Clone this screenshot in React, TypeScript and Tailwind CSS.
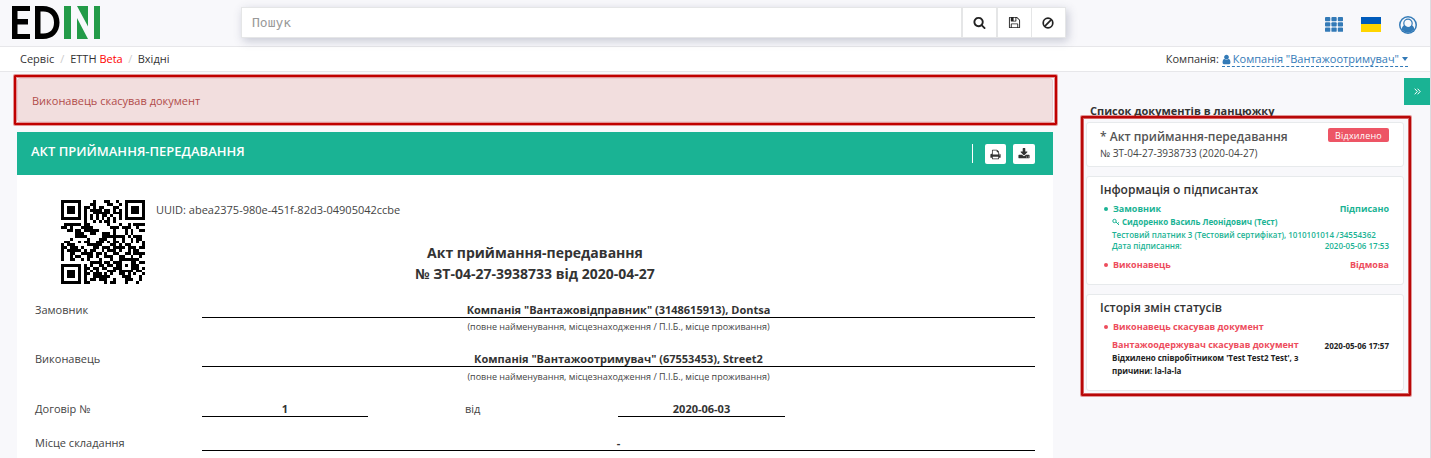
import type { ReactNode } from "react";

const QR_ROWS = [
  "11111110000100011001001111111",
  "10000010001100001100101000001",
  "10111010110101100011001011101",
  "10111010101111011010101011101",
  "10111010100111111011101011101",
  "10000010101010110100101000001",
  "11111110101010101010101111111",
  "00000000100101011010000000000",
  "01111110110000001000100101111",
  "11010001111000000111011100100",
  "00110110111110000010001010011",
  "00000111001100111010001010000",
  "00000111100000111111110101110",
  "00010000010001110010010010110",
  "01100010110011101011010010101",
  "10111000011111000110101100001",
  "11011101000110111011110111011",
  "10111110101100101110100101100",
  "10011001111011010011001101111",
  "10010110011010011100110010010",
  "10011001010001000100111111100",
  "00000000001111011011100011011",
  "11111110101001101101101011100",
  "10000010110110110011100011101",
  "10111010101010001110111110110",
  "10111010110111010100110101001",
  "10111010100111111000011100010",
  "10000010101101110010001110010",
  "11111110110000010110001000100",
];

function QrCode() {
  return (
    <svg width="84" height="84" viewBox="0 0 29 29" shapeRendering="crispEdges">
      {QR_ROWS.flatMap((row, y) =>
        row.split("").map((c, x) => (c === "1" ? <rect key={`${x}-${y}`} x={x} y={y} width="1" height="1" /> : null)),
      )}
    </svg>
  );
}

function Glyph({ d, size, className = "" }: { d: string; size: number; className?: string }) {
  return (
    <svg width={size} height={size} viewBox="0 0 1792 1792" fill="currentColor" className={`shrink-0 ${className}`}>
      <path d={d} />
    </svg>
  );
}

const SEARCH =
  "M1216 832q0-185-131.5-316.5t-316.5-131.5-316.5 131.5-131.5 316.5 131.5 316.5 316.5 131.5 316.5-131.5 131.5-316.5zm512 832q0 52-38 90t-90 38q-54 0-90-38l-343-342q-179 124-399 124-143 0-273.5-55.5t-225-150-150-225-55.5-273.5 55.5-273.5 150-225 225-150 273.5-55.5 273.5 55.5 225 150 150 225 55.5 273.5q0 220-124 399l343 343q37 37 37 90z";
const FLOPPY =
  "M512 1536h768v-384h-768v384zm896 0h128v-896q0-14-10-38.5t-20-34.5l-281-281q-10-10-34-20t-39-10v416q0 40-28 68t-68 28h-576q-40 0-68-28t-28-68v-416h-128v1280h128v-416q0-40 28-68t68-28h832q40 0 68 28t28 68v416zm-384-928v-320q0-13-9.5-22.5t-22.5-9.5h-192q-13 0-22.5 9.5t-9.5 22.5v320q0 13 9.5 22.5t22.5 9.5h192q13 0 22.5-9.5t9.5-22.5zm640 32v928q0 40-28 68t-68 28h-1344q-40 0-68-28t-28-68v-1344q0-40 28-68t68-28h928q40 0 88 20t76 48l280 280q28 28 48 76t20 88z";
const PRINT =
  "M448 1536h896v-256h-896v256zm0-640h896v-384h-160q-40 0-68-28t-28-68v-160h-640v640zm1152 64q0-26-19-45t-45-19-45 19-19 45 19 45 45 19 45-19 19-45zm128 0v416q0 13-9.5 22.5t-22.5 9.5h-224v160q0 40-28 68t-68 28h-960q-40 0-68-28t-28-68v-160h-224q-13 0-22.5-9.5t-9.5-22.5v-416q0-79 56.5-135.5t135.5-56.5h64v-544q0-40 28-68t68-28h672q40 0 88 20t76 48l152 152q28 28 48 76t20 88v256h64q79 0 135.5 56.5t56.5 135.5z";
const DOWNLOAD =
  "M1344 1344q0-26-19-45t-45-19-45 19-19 45 19 45 45 19 45-19 19-45zm256 0q0-26-19-45t-45-19-45 19-19 45 19 45 45 19 45-19 19-45zm128-224v320q0 40-28 68t-68 28h-1472q-40 0-68-28t-28-68v-320q0-40 28-68t68-28h465l135 136q58 56 136 56t136-56l136-136h464q40 0 68 28t28 68zm-325-569q17 41-14 70l-448 448q-18 19-45 19t-45-19l-448-448q-31-29-14-70 17-39 59-39h256v-448q0-26 19-45t45-19h256q26 0 45 19t19 45v448h256q42 0 59 39z";
const USER =
  "M1536 1399q0 109-62.5 187t-150.5 78h-854q-88 0-150.5-78t-62.5-187q0-85 8.5-160.5t31.5-152 58.5-131 94-89 134.5-34.5q131 128 313 128t313-128q76 0 134.5 34.5t94 89 58.5 131 31.5 152 8.5 160.5zm-256-887q0 159-112.5 271.5t-271.5 112.5-271.5-112.5-112.5-271.5 112.5-271.5 271.5-112.5 271.5 112.5 112.5 271.5z";

function Logo() {
  return (
    <svg width="88" height="33" viewBox="0 0 88 33">
      <path d="M0 0H18V5H5.5V13H16V18.500H5.500V28H18V33H0Z" fill="#000" />
      <path
        fillRule="evenodd"
        d="M23 0H31C41 0 47.500 6.500 47.500 16.500S41 33 31 33H23ZM28.500 5.500V27.500H31.500C38 27.500 42 23.500 42 16.500S38 5.500 31.500 5.500Z"
        fill="#000"
      />
      <path d="M52 0H59V33H52ZM82 0H88V33H82ZM65 0H76V20.500ZM65 12L76 33H65Z" fill="#239b48" />
    </svg>
  );
}

function Header() {
  return (
    <header className="flex h-[47px] items-start border-b border-[#e7e7ea] bg-[#f8f8fb]">
      <div className="ml-3 mt-1.5 w-[229px]">
        <Logo />
      </div>
      <div className="mt-[7px] flex h-[31px] w-[825px] border border-[#e5e6e7] bg-white text-[#222] shadow-[2px_3px_9px_rgba(70,75,110,0.28)]">
        <div className="flex flex-1 items-center pl-[10px] pt-px font-['DejaVu_Sans_Mono',monospace] text-[13px] text-[#999]">
          Пошук
        </div>
        <div className="flex w-[35px] items-center justify-center border-l-2 border-[#e5e6e7]">
          <Glyph d={SEARCH} size={13} />
        </div>
        <div className="flex w-[35px] items-center justify-center border-l-2 border-[#e5e6e7]">
          <Glyph d={FLOPPY} size={13} />
        </div>
        <div className="flex w-[34px] items-center justify-center border-l border-[#e5e6e7] pr-px">
          <svg width="12" height="12" viewBox="0 0 12 12" fill="none" stroke="currentColor" strokeWidth="1.700">
            <circle cx="6" cy="6" r="4.800" />
            <path d="M9.300 2.700L2.700 9.300" />
          </svg>
        </div>
      </div>
      <div className="ml-auto mr-[13px] mt-[15px] flex h-[19px] items-center text-[#337ab7]">
        <svg width="18" height="15" viewBox="0 0 18 15" fill="currentColor" className="mr-[18px]">
          {[0, 5.3, 10.6].flatMap((y) =>
            [0, 6.4, 12.8].map((x) => <rect key={`${x}-${y}`} x={x} y={y} width="5.300" height="4.200" rx="0.900" />),
          )}
        </svg>
        <div className="mr-[18px] flex h-[15px] w-5 flex-col">
          <div className="h-[7px] bg-[#005bbb]" />
          <div className="h-2 bg-[#ffd500]" />
        </div>
        <svg width="18" height="18" viewBox="0 0 18 18">
          <circle cx="9" cy="9" r="9" fill="currentColor" />
          <circle cx="9" cy="9" r="7.500" fill="#f8f8fb" />
          <path d="M2.600 13.400C3 10.800 4 9.500 5.800 9.300Q9 12.400 12.200 9.300C14 9.500 15 10.800 15.400 13.400Q9 20 2.600 13.400Z" fill="currentColor" />
          <circle cx="9" cy="7.300" r="3.900" fill="#f8f8fb" />
          <circle cx="9" cy="7.300" r="4.200" fill="none" stroke="currentColor" strokeWidth="1.200" />
        </svg>
      </div>
    </header>
  );
}

function Breadcrumbs() {
  return (
    <nav className="flex h-[25px] items-center border-b border-[#e7e7ea] bg-white pl-5 pr-[22px] text-[11px] text-[#333]">
      <span>Сервіс</span>
      <span className="w-4 text-center text-[#ccc]">/</span>
      <span>
        ЕТТН <span className="text-[#f00]">Beta</span>
      </span>
      <span className="w-[15px] text-center text-[#ccc]">/</span>
      <span>Вхідні</span>
      <span className="ml-auto mr-[3px]">Компанія:</span>
      <span className="flex h-[15px] items-center border-b border-dashed border-[#337ab7] pt-px text-[#337ab7]">
        <Glyph d={USER} size={11} className="-ml-px mr-px" />
        Компанія "Вантажоотримувач"
        <span className="ml-[3px] border-x-[3.5px] border-t-[4px] border-x-transparent border-t-[#337ab7]" />
      </span>
    </nav>
  );
}

function Field({ children, className = "" }: { children: ReactNode; className?: string }) {
  return (
    <div className={`h-4 border-b border-black text-center font-bold leading-[15px] text-[#333] ${className}`}>{children}</div>
  );
}

function Party({ label, value, noteClass }: { label: string; value: string; noteClass: string }) {
  return (
    <div className="flex items-start">
      <div className="w-[167px] leading-[15px]">{label}</div>
      <div className="flex-1">
        <Field>{value}</Field>
        <div className={`text-center text-[9px] leading-3 ${noteClass}`}>
          (повне найменування, місцезнаходження / П.І.Б., місце проживання)
        </div>
      </div>
    </div>
  );
}

function DocumentPanel() {
  return (
    <section className="flex h-[326px] flex-col bg-white">
      <div className="flex h-[43px] items-center bg-[#1ab394] pl-[14px] pr-[18px] text-white">
        <h1 className="-mt-1 text-[13px] font-semibold">АКТ ПРИЙМАННЯ-ПЕРЕДАВАННЯ</h1>
        <div className="ml-auto mr-3 h-[19px] w-px bg-white" />
        <div className="mr-[7px] flex h-5 w-[21px] items-center justify-center rounded-[2px] bg-white pt-px text-[#333]">
          <Glyph d={PRINT} size={11} />
        </div>
        <div className="flex h-5 w-[22px] items-center justify-center rounded-[2px] bg-white text-[#333]">
          <Glyph d={DOWNLOAD} size={12} />
        </div>
      </div>
      <div className="px-[18px] text-[11px] text-[#444]">
        <div className="mt-[25px] flex h-[84px] pl-[26px]">
          <QrCode />
          <div className="ml-[11px] mt-[2px] leading-[15px]">UUID: abea2375-980e-451f-82d3-04905042ccbe</div>
        </div>
        <h2 className="-mt-[42px] text-center text-[14px] font-bold leading-[21px] text-[#333]">
          Акт приймання-передавання
          <br />№ ЗТ-04-27-3938733 від 2020-04-27
        </h2>
        <div className="mt-[18px] h-[49px]">
          <Party label="Замовник" value={'Компанія "Вантажовідправник" (3148615913), Dontsa'} noteClass="mt-[3px]" />
        </div>
        <div className="h-[50px]">
          <Party label="Виконавець" value={'Компанія "Вантажоотримувач" (67553453), Street2'} noteClass="mt-1" />
        </div>
        <div className="flex h-[34px]">
          <div className="w-[167px] leading-[15px]">Договір №</div>
          <Field className="w-[166px]">1</Field>
          <div className="ml-[97px] w-[153px] leading-[15px]">від</div>
          <Field className="w-[167px]">2020-06-03</Field>
        </div>
        <div className="flex">
          <div className="w-[167px] leading-[15px]">Місце складання</div>
          <Field className="flex-1">-</Field>
        </div>
      </div>
    </section>
  );
}

function Card({ children, className }: { children: ReactNode; className: string }) {
  return <div className={`rounded-[3px] border border-[#e7eaec] bg-white pl-[13px] pr-[14px] ${className}`}>{children}</div>;
}

function Bullet() {
  return <span className="mr-[5px] size-1 shrink-0 rounded-full bg-current" />;
}

function Sidebar() {
  return (
    <aside className="ml-[33px] flex w-[318px] flex-col">
      <h2 className="ml-1 mt-[31px] h-[19px] text-[11px] font-bold leading-[16px] text-[#333]">Список документів в ланцюжку</h2>
      <Card className="h-[45px] pt-[4px] text-[#555]">
        <div className="flex h-[18px] justify-between text-[12px] font-semibold leading-[20px]">
          <span>* Акт приймання-передавання</span>
          <span className="mt-px h-[14px] w-[61px] rounded-[2px] bg-[#ed5565] text-center text-[9px] font-medium leading-[15px] tracking-[0.2px] text-white">
            Відхилено
          </span>
        </div>
        <div className="text-[10px] leading-4 text-[#444]">№ ЗТ-04-27-3938733 (2020-04-27)</div>
      </Card>
      <Card className="mt-[9px] h-[109px] pt-1 text-[#1ab394]">
        <h3 className="h-[22px] text-[12px] font-semibold leading-[18px] text-[#333]">Інформація о підписантах</h3>
        <div className="flex h-3 items-center pl-[4px] text-[9px] font-bold">
          <Bullet />
          Замовник<span className="ml-auto">Підписано</span>
        </div>
        <div className="flex h-[14px] items-center pl-[12px] text-[8px] font-bold">
          <svg width="8" height="8" viewBox="0 0 8 8" fill="none" stroke="currentColor" className="mr-[2px]">
            <circle cx="2.500" cy="3" r="1.700" />
            <path d="M4 4L7 7M5.500 5.500L7 4.500" />
          </svg>
          Сидоренко Василь Леонідович (Тест)
        </div>
        <div className="h-[11px] whitespace-nowrap pl-[12px] text-[8px] font-semibold leading-[12px]">
          Тестовий платник 3 (Тестовий сертифікат), 1010101014 /34554362
        </div>
        <div className="flex h-[19px] justify-between pl-[12px] text-[8px] font-semibold leading-[12px]">
          <span>Дата підписання:</span>
          <span>2020-05-06 17:53</span>
        </div>
        <div className="flex h-3 items-center pl-[4px] text-[9px] font-bold text-[#ed4c5c]">
          <Bullet />
          Виконавець<span className="ml-auto">Відмова</span>
        </div>
      </Card>
      <Card className="mt-[9px] h-[97px] pt-1 text-[#ed4c5c]">
        <h3 className="h-[22px] text-[12px] font-semibold leading-[18px] text-[#333]">Історія змін статусів</h3>
        <div className="flex h-3 items-center pl-[4px] text-[9px] font-bold">
          <Bullet />
          Виконавець скасував документ
        </div>
        <div className="mt-[6px] flex items-start justify-between pl-[12px] font-bold">
          <div>
            <div className="text-[9px] leading-[12px]">Вантажоодержувач скасував документ</div>
            <div className="text-[8px] leading-[13px] text-[#222]">
              Відхилено співробітником 'Test Test2 Test', з
              <br />
              причини: la-la-la
            </div>
          </div>
          <div className="pt-px text-[8px] leading-[12px] text-[#222]">2020-05-06 17:57</div>
        </div>
      </Card>
    </aside>
  );
}

export default function App() {
  return (
    <div className="relative h-[458px] w-[1431px] overflow-hidden border-r border-[#dcdce0] bg-[#f8f8fb] font-['Open_Sans',sans-serif]">
      <Header />
      <Breadcrumbs />
      <main className="flex items-start pl-[17px]">
        <div className="w-[1036px]">
          <div className="mb-[10px] mt-[6px] flex h-[44px] items-center rounded-[3px] border border-[#ebccd1] bg-[#f2dede] px-[14px] pt-[2px] text-[11px] text-[#b14c4a]">
            Виконавець скасував документ
          </div>
          <DocumentPanel />
        </div>
        <Sidebar />
      </main>
      <button className="absolute right-0 top-[78px] flex h-[27px] w-[26px] items-center justify-center bg-[#1ab394] text-white">
        <svg width="7" height="7" viewBox="0 0 7 7" fill="none" stroke="currentColor">
          <path d="M0.700 0.700L3.300 3.500L0.700 6.300M3.600 0.700L6.200 3.500L3.600 6.300" />
        </svg>
      </button>
      <div className="absolute left-[14px] top-[75px] h-[50px] w-[1043px] rounded-[1px] border-2 border-[#c00000] shadow-[0_0_0_1px_rgba(192,0,0,0.4),inset_0_0_0_1px_rgba(192,0,0,0.4)]" />
      <div className="absolute left-[1081px] top-[116px] h-[280px] w-[330px] rounded-[1px] border-2 border-[#b80808] shadow-[0_0_0_1px_rgba(192,0,0,0.4),inset_0_0_0_1px_rgba(192,0,0,0.6)]" />
    </div>
  );
}
